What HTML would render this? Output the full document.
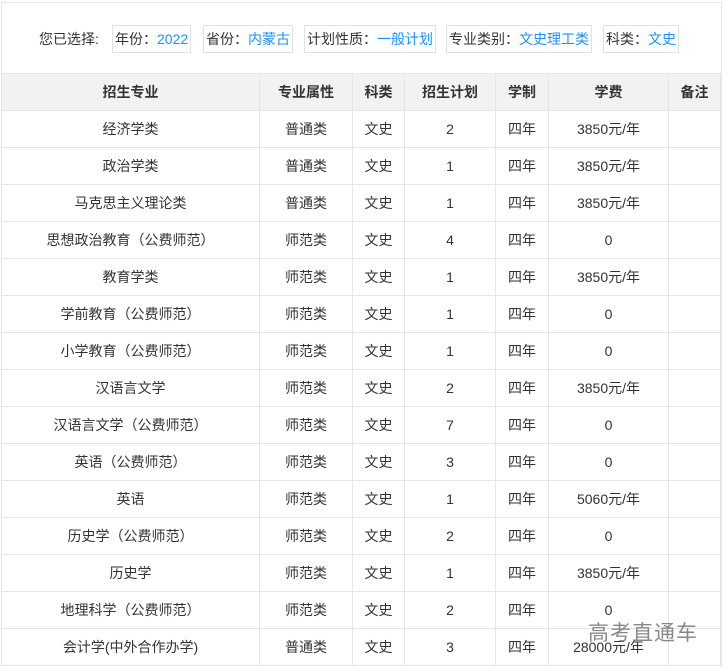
<!DOCTYPE html>
<html><head><meta charset="utf-8"><style>
html,body{margin:0;width:726px;height:670px;overflow:hidden}
body{background:#fff;font-family:"Liberation Sans","Noto Sans CJK SC",sans-serif;font-size:14px;color:#333;position:relative}
.wrap{position:absolute;left:1px;top:2px;width:719px;height:664px;border:1px solid #e6e6e6;border-bottom:none}
.f{position:absolute;top:25px;height:26px;line-height:26px;border:1px solid #e2e2e2;padding:0 2px;white-space:nowrap;font-size:14px}
.f b{font-weight:normal;color:#1e90ff}
table{position:absolute;left:1px;top:73px;border-collapse:collapse;table-layout:fixed}
td,th{border:1px solid #e6e6e6;height:36px;text-align:center;padding:0;font-size:14px}
th{background:#f2f2f2;font-weight:bold;color:#333}
.wm{position:absolute;left:588px;top:617px;font-size:21px;color:#888;letter-spacing:1px}
</style></head><body>
<div class="wrap"></div>
<div style="position:absolute;left:39px;top:29px;font-size:14px">您已选择:</div>
<div class="f" style="left:112px">年份：<b>2022</b></div>
<div class="f" style="left:203px">省份：<b>内蒙古</b></div>
<div class="f" style="left:304px">计划性质：<b>一般计划</b></div>
<div class="f" style="left:446px">专业类别：<b>文史理工类</b></div>
<div class="f" style="left:603px">科类：<b>文史</b></div>
<table>
<colgroup><col style="width:258px"><col style="width:93px"><col style="width:52px"><col style="width:91px"><col style="width:53px"><col style="width:120px"><col style="width:52px"></colgroup>
<tr><th>招生专业</th><th>专业属性</th><th>科类</th><th>招生计划</th><th>学制</th><th>学费</th><th>备注</th></tr>
<tr><td>经济学类</td><td>普通类</td><td>文史</td><td>2</td><td>四年</td><td>3850元/年</td><td></td></tr>
<tr><td>政治学类</td><td>普通类</td><td>文史</td><td>1</td><td>四年</td><td>3850元/年</td><td></td></tr>
<tr><td>马克思主义理论类</td><td>普通类</td><td>文史</td><td>1</td><td>四年</td><td>3850元/年</td><td></td></tr>
<tr><td>思想政治教育（公费师范）</td><td>师范类</td><td>文史</td><td>4</td><td>四年</td><td>0</td><td></td></tr>
<tr><td>教育学类</td><td>师范类</td><td>文史</td><td>1</td><td>四年</td><td>3850元/年</td><td></td></tr>
<tr><td>学前教育（公费师范）</td><td>师范类</td><td>文史</td><td>1</td><td>四年</td><td>0</td><td></td></tr>
<tr><td>小学教育（公费师范）</td><td>师范类</td><td>文史</td><td>1</td><td>四年</td><td>0</td><td></td></tr>
<tr><td>汉语言文学</td><td>师范类</td><td>文史</td><td>2</td><td>四年</td><td>3850元/年</td><td></td></tr>
<tr><td>汉语言文学（公费师范）</td><td>师范类</td><td>文史</td><td>7</td><td>四年</td><td>0</td><td></td></tr>
<tr><td>英语（公费师范）</td><td>师范类</td><td>文史</td><td>3</td><td>四年</td><td>0</td><td></td></tr>
<tr><td>英语</td><td>师范类</td><td>文史</td><td>1</td><td>四年</td><td>5060元/年</td><td></td></tr>
<tr><td>历史学（公费师范）</td><td>师范类</td><td>文史</td><td>2</td><td>四年</td><td>0</td><td></td></tr>
<tr><td>历史学</td><td>师范类</td><td>文史</td><td>1</td><td>四年</td><td>3850元/年</td><td></td></tr>
<tr><td>地理科学（公费师范）</td><td>师范类</td><td>文史</td><td>2</td><td>四年</td><td>0</td><td></td></tr>
<tr><td>会计学(中外合作办学)</td><td>普通类</td><td>文史</td><td>3</td><td>四年</td><td>28000元/年</td><td></td></tr>
</table>
<div class="wm">高考直通车</div>
</body></html>
